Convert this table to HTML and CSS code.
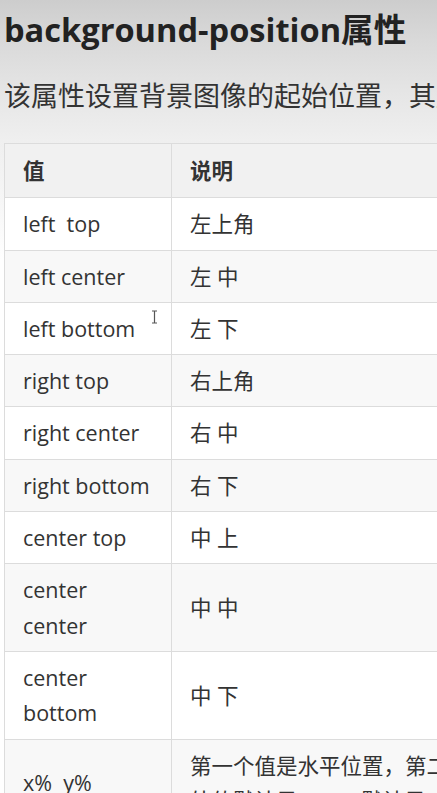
FILE: index.html
```html
<!DOCTYPE html>
<html lang="zh-CN">
<head>
<meta charset="utf-8">
<title>background-position属性</title>
<link rel="stylesheet" href="styles.css">
</head>
<body>
<main class="page">
  <h1 class="title">background-position属性</h1>
  <p class="intro">该属性设置背景图像的起始位置，其属性值如下表所示</p>
  <table class="props">
    <thead>
      <tr><th class="c1">值</th><th class="c2">说明</th></tr>
    </thead>
    <tbody>
      <tr><td class="c1">left&nbsp; top</td><td>左上角</td></tr>
      <tr><td class="c1">left center</td><td>左 中</td></tr>
      <tr><td class="c1 has-cursor">left bottom<svg class="ibeam" width="7" height="14" viewBox="0 0 7 14"><path d="M1 1h5M3.5 1v12M1 13h5" stroke="#555" stroke-width="1.2" fill="none"/></svg></td><td>左 下</td></tr>
      <tr><td class="c1">right top</td><td>右上角</td></tr>
      <tr><td class="c1">right center</td><td>右 中</td></tr>
      <tr><td class="c1">right bottom</td><td>右 下</td></tr>
      <tr><td class="c1">center top</td><td>中 上</td></tr>
      <tr><td class="c1">center center</td><td>中 中</td></tr>
      <tr><td class="c1">center bottom</td><td>中 下</td></tr>
      <tr><td class="c1">x%&nbsp; y%</td><td>第一个值是水平位置，第二个值是垂直位置。如果仅规定了一个值，另<br>外值默认是50%，默认是0% 0%。左上角是0% 0%，右下角是100% 100%。</td></tr>
    </tbody>
  </table>
</main>
</body>
</html>
```

FILE: styles.css
```css
html, body {
  margin: 0;
  padding: 0;
  overflow: hidden;
}
body {
  background: linear-gradient(to bottom, #cdcdcd 0px, #d9d9d9 40px, #e6e6e6 95px, #efefef 140px, #f6f6f6 200px, #ffffff 260px);
  color: #333;
  font-family: "Open Sans", "Noto Sans CJK SC", sans-serif;
  min-height: 793px;
}
.page {
  padding: 0 4px;
}
.title {
  margin: 8px 0 0;
  font-size: 32.6px;
  line-height: 44px;
  font-weight: 700;
  color: #222;
  white-space: nowrap;
}
.intro {
  margin: 24px 0 27px;
  font-size: 27px;
  line-height: 40px;
  color: #333;
  white-space: nowrap;
}
.props {
  border-collapse: collapse;
  width: 1000px;
  font-size: 21.5px;
  line-height: 35.3px;
  color: #333;
}
.props th,
.props td {
  border: 1px solid #dcdcdc;
  padding: 8px 18px;
  text-align: left;
  vertical-align: middle;
}
.props th {
  font-weight: 700;
  padding-top: 9px;
  padding-bottom: 9px;
  background: #f1f1f1;
  color: #333;
}
.props .c1 {
  width: 130px;
}
.props tbody tr:nth-child(odd) {
  background: #ffffff;
}
.props tbody tr:nth-child(even) {
  background: #f8f8f8;
}
.has-cursor {
  position: relative;
}
.ibeam {
  position: absolute;
  left: 146px;
  top: 7px;
}
```
